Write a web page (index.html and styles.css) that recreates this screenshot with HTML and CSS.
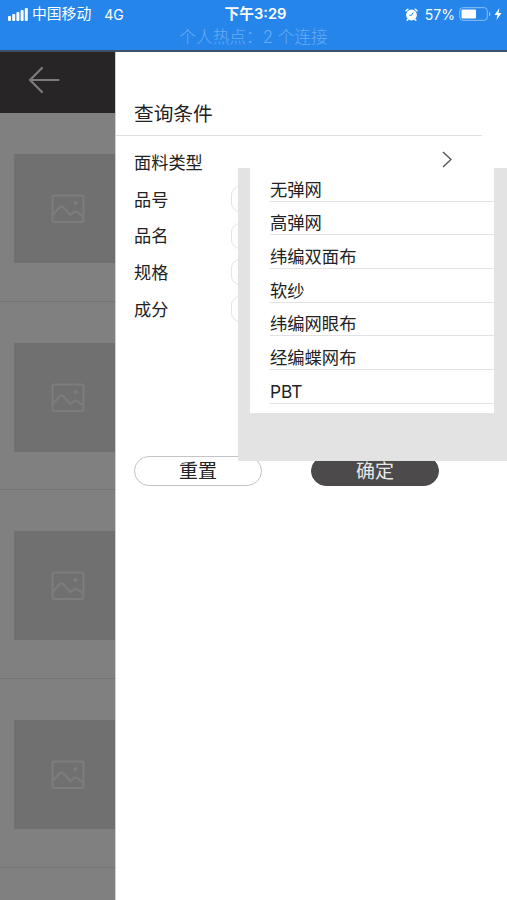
FILE: index.html
```html
<!DOCTYPE html>
<html lang="zh-CN">
<head>
    <meta charset="UTF-8">
    <meta name="viewport" content="width=device-width, initial-scale=1.0">
    <title>查询条件</title>
    <link rel="stylesheet" href="styles.css">
</head>
<body>
    <svg class="symbols" aria-hidden="true">
        <symbol id="icon-picture" viewBox="0 0 34 30">
            <rect x="1.5" y="1.5" width="31" height="26.5" rx="2"/>
            <path d="M2 20.500l7-7.500q1.500-1.500 3 0l7.500 8 3.500-3q1.500-1 3 0l6 4.500"/>
            <circle cx="24.500" cy="9" r="1"/>
        </symbol>
    </svg>

    <header class="status-bar">
        <div class="status-row">
            <div class="status-left">
                <svg class="signal" viewBox="0 0 20 13">
                    <rect x="0" y="8" width="3" height="5" rx="1"/>
                    <rect x="4.2" y="6" width="3" height="7" rx="1"/>
                    <rect x="8.4" y="4" width="3" height="9" rx="1"/>
                    <rect x="12.6" y="2" width="3" height="11" rx="1"/>
                    <rect x="16.8" y="0" width="3" height="13" rx="1"/>
                </svg>
                <span class="carrier">中国移动</span>
                <span>4G</span>
            </div>
            <div class="status-time">下午3:29</div>
            <div class="status-right">
                <svg class="alarm" viewBox="0 0 13 13">
                    <circle cx="6.5" cy="7" r="5.4" fill="#fff"/>
                    <path d="M1 2.800L2.800 1.200M12 2.800L10.200 1.200M3 11.200l-.8 1M10 11.200l.8 1" stroke="#fff" stroke-width="1.500" stroke-linecap="round"/>
                    <path d="M8.200 4.500L6.500 7.300H4.300" fill="none" stroke="#2585ea" stroke-width="1"/>
                </svg>
                <span class="percent">57%</span>
                <svg class="battery" viewBox="0 0 32 14">
                    <rect x=".7" y=".7" width="27.600" height="12.600" rx="3" fill="none" stroke="#8fc0f4" stroke-width="1"/>
                    <rect x="2.500" y="2.500" width="14.500" height="9" rx="1" fill="#fff"/>
                    <path d="M30 4.500v5q1.500-1 1.500-2.500t-1.500-2.500z" fill="#8fc0f4"/>
                </svg>
                <svg class="bolt" viewBox="0 0 8 12">
                    <path d="M5.500 0L.5 7h3L2.500 12l5-7h-3z" fill="#fff"/>
                </svg>
            </div>
        </div>
        <div class="hotspot">个人热点：2 个连接</div>
    </header>

    <main class="screen">
        <section class="backdrop">
            <div class="nav">
                <svg class="back" viewBox="0 0 32 28">
                    <path d="M14 2L2 14l12 12M2 14h28.500"/>
                </svg>
            </div>
            <div class="item"><div class="thumb"><svg><use href="#icon-picture"/></svg></div></div>
            <div class="item"><div class="thumb"><svg><use href="#icon-picture"/></svg></div></div>
            <div class="item"><div class="thumb"><svg><use href="#icon-picture"/></svg></div></div>
            <div class="item"><div class="thumb"><svg><use href="#icon-picture"/></svg></div></div>
        </section>

        <section class="panel">
            <h1>查询条件</h1>
            <div class="field">
                <span>面料类型</span>
                <svg class="chevron" viewBox="0 0 10 17"><path d="M1 1l8 7.500-8 7.500"/></svg>
            </div>
            <div class="field"><label for="number">品号</label><input type="text" id="number"></div>
            <div class="field"><label for="name">品名</label><input type="text" id="name"></div>
            <div class="field"><label for="spec">规格</label><input type="text" id="spec"></div>
            <div class="field"><label for="material">成分</label><input type="text" id="material"></div>
            <div class="actions">
                <button type="button" class="btn">重置</button>
                <button type="button" class="btn btn-dark">确定</button>
            </div>

            <div class="dropdown">
                <ul>
                    <li>无弹网</li>
                    <li>高弹网</li>
                    <li>纬编双面布</li>
                    <li>软纱</li>
                    <li>纬编网眼布</li>
                    <li>经编蝶网布</li>
                    <li>PBT</li>
                </ul>
            </div>
        </section>
    </main>
</body>
</html>
```
FILE: styles.css
```css
* {
    box-sizing: border-box;
}

body {
    margin: 0;
    height: 900px;
    overflow: hidden;
    display: flex;
    flex-direction: column;
    font-family: Inter, "Noto Sans CJK SC", sans-serif;
    color: #222;
    background: #fff;
}

.symbols {
    display: none;
}

/* status bar */
.status-bar {
    flex: none;
    height: 52px;
    background: #2585ea;
    border-bottom: 2px solid #40506a;
    color: #fff;
}

.status-row {
    display: grid;
    grid-template-columns: 1fr auto 1fr;
    align-items: center;
    height: 27px;
    padding: 0 5px 0 8px;
    font-size: 14px;
    line-height: 27px;
}

.status-left,
.status-right {
    display: flex;
    align-items: center;
}

.status-right {
    justify-content: flex-end;
}

.signal {
    width: 20px;
    height: 13px;
    margin-right: 4px;
    fill: #fff;
}

.carrier {
    margin-right: 13px;
    padding-top: 1px;
    font-size: 14.8px;
}

.status-time {
    padding-left: 1px;
    font-size: 14.7px;
    font-weight: 600;
}

.alarm {
    width: 13px;
    height: 13px;
    margin-right: 7px;
}

.percent {
    margin-right: 4px;
}

.battery {
    width: 32px;
    height: 14px;
    margin-right: 3px;
}

.bolt {
    width: 8px;
    height: 12px;
}

.hotspot {
    height: 20px;
    line-height: 21px;
    font-size: 16.7px;
    font-weight: 300;
    text-align: center;
    color: #69acf2;
}

.screen {
    flex: 1;
    min-height: 0;
    display: flex;
}

/* dimmed list behind the panel */
.backdrop {
    width: 115px;
    flex: none;
    overflow: hidden;
    background: #808080;
}

.nav {
    height: 61px;
    padding: 14px 0 0 28px;
    background: #272525;
}

.back {
    width: 32px;
    height: 28px;
    fill: none;
    stroke: #7c7b7b;
    stroke-width: 2.2;
    stroke-linecap: round;
    stroke-linejoin: round;
}

.item {
    height: 188.7px;
    padding: 41px 0 0 14px;
    border-bottom: 1px solid #747474;
}

.thumb {
    height: 109px;
    padding: 40px 0 0 37px;
    background: #707070;
}

.thumb svg {
    display: block;
    width: 34px;
    height: 30px;
    fill: none;
    stroke: #7d7d7d;
    stroke-width: 2;
}

/* filter panel */
.panel {
    position: relative;
    flex: 1;
    padding-left: 19px;
    border-left: 1px solid #d0d0d0;
    margin-left: 0;
    background: #fff;
}

h1 {
    height: 84px;
    margin: 0 25px 8px -19px;
    padding: 47px 0 0 18px;
    border-bottom: 1px solid #dfdfdf;
    font-size: 19.7px;
    font-weight: 400;
    line-height: 30px;
}

.field {
    display: flex;
    align-items: center;
    height: 36.7px;
    margin-left: -1px;
    font-size: 17.2px;
    line-height: 24px;
}

.field span,
.field label {
    padding-top: 1px;
}

.field label {
    width: 97px;
}

.field input {
    width: 208px;
    height: 26px;
    border: 1px solid #e4e4e4;
    border-radius: 9px;
}

.chevron {
    width: 10px;
    height: 17px;
    margin: -6px 0 0 239px;
    fill: none;
    stroke: #555;
    stroke-width: 1.4;
}

.actions {
    display: flex;
    gap: 49px;
    margin: 128.5px 0 0 -1px;
}

.btn {
    width: 128px;
    height: 30px;
    padding: 2px 0 0;
    border: 1px solid #c4c4c4;
    border-radius: 15px;
    background: #fff;
    color: #222;
    font-family: inherit;
    font-size: 19px;
    line-height: 26px;
}

.btn-dark {
    border-color: #4c4a4a;
    background: #4c4a4a;
    color: #e8e8e8;
}

/* type list, lies over the form */
.dropdown {
    position: absolute;
    top: 116px;
    right: 0;
    width: 269px;
    height: 293px;
    padding: 0 13px 0 12px;
    background: #e3e3e3;
}

.dropdown ul {
    height: 245px;
    margin: 0;
    padding: 0 0 0 20px;
    list-style: none;
    background: #fff;
}

.dropdown li {
    height: 33.7px;
    padding-top: 8.5px;
    border-bottom: 1px solid #e2e2e2;
    font-size: 17.3px;
    line-height: 25px;
}
```
